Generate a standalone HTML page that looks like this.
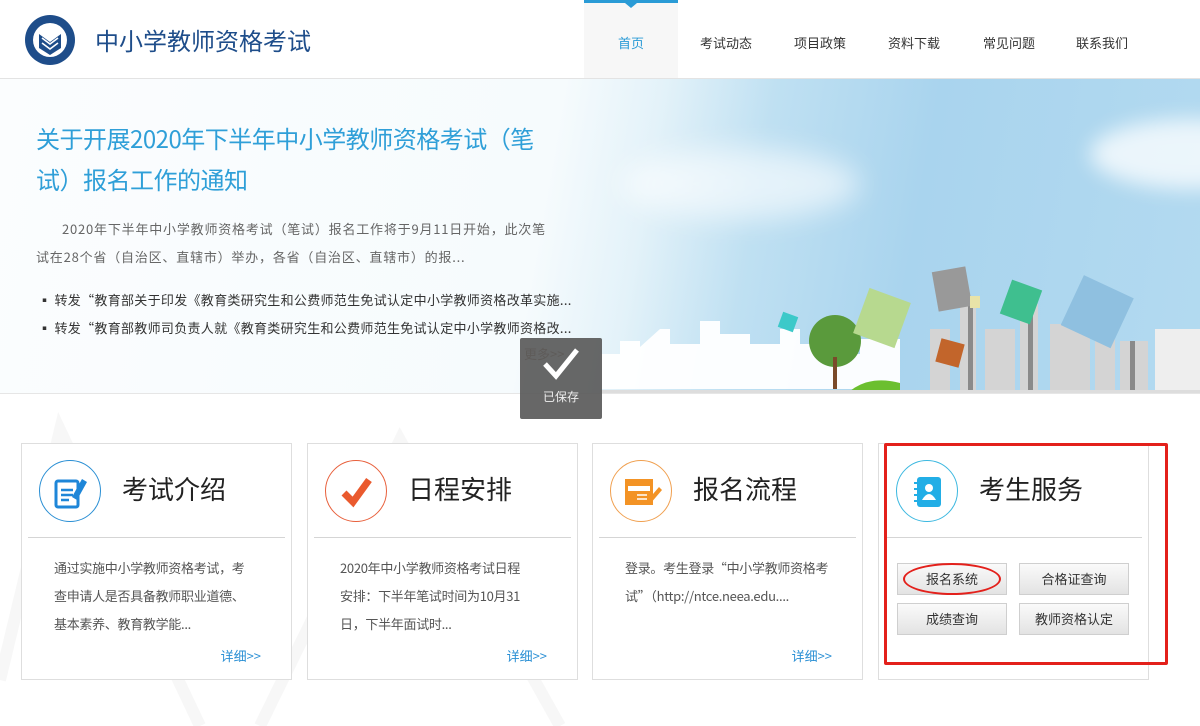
<!DOCTYPE html>
<html><head><meta charset="utf-8"><style>
*{margin:0;padding:0;box-sizing:border-box}
body{width:1200px;height:726px;overflow:hidden;background:#fff;font-family:"Noto Sans CJK SC","Liberation Sans",sans-serif;position:relative}
.a{position:absolute}
.nav{top:0;height:78px;line-height:86px;font-size:13px;color:#333;text-align:center}
.banner{top:79px;left:0;width:1200px;height:314px;background:linear-gradient(100deg,#fbfdfe 0%,#f6fbfd 45%,#e3f2f9 53%,#bfe0f2 62%,#a9d4ee 75%,#b3daf0 100%);overflow:hidden}
.card{top:443px;width:271px;height:237px;border:1px solid #dedede;background:#fff}
.circ{left:17px;top:16px;width:62px;height:62px;border-radius:50%;border:1px solid}
.ct{left:100px;top:26px;font-size:26px;color:#222}
.hr{left:6px;top:93px;width:257px;height:1px;background:#d5d5d5}
.txt{left:32px;top:110px;width:218px;font-size:13px;line-height:28px;color:#555;letter-spacing:-0.3px}
.more{right:30px;top:202px;font-size:13px;color:#2a8fd4}
.btn{width:110px;height:32px;border:1px solid #cfcfcf;background:linear-gradient(#fafafa,#e3e3e3);font-size:13px;color:#333;text-align:center;line-height:30px}
</style></head><body>
<svg class="a" style="left:24px;top:14px" width="52" height="52" viewBox="0 0 52 52"><circle cx="26" cy="26" r="25" fill="#1e4d8a"/><circle cx="26" cy="26" r="17" fill="#fff"/><path d="M15 20 L26 28 L37 20 L37 34 L26 41 L15 34Z" fill="#1e4d8a"/><path d="M18 24l8 6 8-6M18 29l8 6 8-6" stroke="#fff" stroke-width="1.6" fill="none"/></svg>
<div class="a" style="left:95px;top:23px;font-size:24px;line-height:34px;color:#1e4d8a">中小学教师资格考试</div>
<div class="a" style="left:584px;top:0;width:94px;height:78px;background:#f7f7f7"></div>
<div class="a" style="left:584px;top:0;width:94px;height:3px;background:#2a9bd6"></div>
<div class="a" style="left:625px;top:3px;width:0;height:0;border-left:6px solid transparent;border-right:6px solid transparent;border-top:5px solid #2a9bd6"></div>
<div class="a nav" style="left:584px;width:94px;color:#2a9bd6">首页</div>
<div class="a nav" style="left:680px;width:92px">考试动态</div>
<div class="a nav" style="left:774px;width:92px">项目政策</div>
<div class="a nav" style="left:868px;width:92px">资料下载</div>
<div class="a nav" style="left:963px;width:92px">常见问题</div>
<div class="a nav" style="left:1056px;width:92px">联系我们</div>
<div class="a" style="left:0;top:78px;width:1200px;height:1px;background:#e3e3e3"></div>
<div class="a banner">
<div class="a" style="left:620px;top:70px;width:240px;height:70px;border-radius:50%;background:rgba(255,255,255,.6);filter:blur(14px)"></div>
<div class="a" style="left:1090px;top:40px;width:200px;height:70px;border-radius:50%;background:rgba(255,255,255,.75);filter:blur(10px)"></div>
<svg class="a" style="left:600px;top:150px" width="600" height="164" viewBox="0 0 600 164">
<path d="M0 160 L0 125 L20 125 L20 112 L40 112 L40 118 L60 100 L70 100 L70 115 L100 115 L100 92 L120 92 L120 105 L150 105 L150 115 L180 115 L180 100 L200 100 L200 115 L230 115 L230 125 L260 125 L260 110 L300 110 L300 160Z" fill="#fff" opacity=".95"/>
<g fill="#d4d4d4"><rect x="330" y="100" width="20" height="64"/><rect x="360" y="70" width="16" height="94"/><rect x="385" y="100" width="30" height="64"/><rect x="420" y="75" width="18" height="89"/><rect x="450" y="95" width="40" height="69"/><rect x="495" y="105" width="20" height="59"/><rect x="520" y="112" width="28" height="52"/><rect x="555" y="100" width="45" height="64" fill="#eee"/></g>
<g fill="#8a8a8a"><rect x="368" y="70" width="5" height="94"/><rect x="428" y="75" width="5" height="89"/><rect x="530" y="112" width="5" height="52"/></g>
<circle cx="235" cy="112" r="26" fill="#5a9a3c"/><rect x="233" y="128" width="4" height="32" fill="#7a4a2a"/>
<path d="M250 162 q20-16 50-8 l0 8z" fill="#6bbf2f"/>
<rect x="180" y="85" width="16" height="16" fill="#3cc9c9" transform="rotate(20 188 93)"/>
<rect x="260" y="120" width="44" height="48" fill="#b7d98f" transform="translate(0 -55) rotate(20 282 144)"/>
<rect x="335" y="40" width="34" height="40" fill="#999" transform="rotate(-10 352 60)"/>
<rect x="338" y="112" width="24" height="24" fill="#c2652b" transform="rotate(15 350 124)"/>
<rect x="370" y="137" width="10" height="12" fill="#e8e3a8" transform="translate(0 -70)"/>
<rect x="405" y="135" width="32" height="36" fill="#3fbf8f" transform="translate(0 -80) rotate(20 421 153)"/>
<rect x="470" y="75" width="55" height="55" fill="#8fc0e0" transform="translate(0 -20) rotate(25 497 102)"/>
<rect x="0" y="161" width="600" height="3" fill="#ddd"/>
</svg>
<div class="a" style="left:36px;top:38px;width:520px;font-size:24px;line-height:41px;color:#2f9fd8;letter-spacing:-0.5px">关于开展2020年下半年中小学教师资格考试（笔试）报名工作的通知</div>
<div class="a" style="left:36px;top:136px;width:516px;font-size:13px;line-height:28px;color:#666;text-indent:26px;letter-spacing:0.8px">2020年下半年中小学教师资格考试（笔试）报名工作将于9月11日开始，此次笔试在28个省（自治区、直辖市）举办，各省（自治区、直辖市）的报...</div>
<div class="a" style="left:38px;top:207px;font-size:13px;line-height:28px;color:#333;white-space:nowrap;letter-spacing:0.3px">▪ 转发“教育部关于印发《教育类研究生和公费师范生免试认定中小学教师资格改革实施...<br>▪ 转发“教育部教师司负责人就《教育类研究生和公费师范生免试认定中小学教师资格改...</div>
<div class="a" style="left:524px;top:265px;font-size:13px;color:#8a6a4a">更多&gt;&gt;</div>
</div>
<div class="a" style="left:0;top:393px;width:1200px;height:1px;background:#e6e6e6"></div>
<svg class="a" style="left:0;top:400px" width="600" height="326"><path d="M0 280 L60 30 L200 326 M260 326 L400 40 L560 326" stroke="#f7f7f7" stroke-width="12" fill="none"/></svg>
<div class="a" style="left:520px;top:338px;width:82px;height:81px;background:rgba(90,90,90,.92);border-radius:2px"></div>
<svg class="a" style="left:541px;top:346px" width="40" height="36"><path d="M4 18 L15 30 L36 4" stroke="#fff" stroke-width="5" fill="none"/></svg>
<div class="a" style="left:520px;top:388px;width:82px;text-align:center;font-size:12px;color:#eee">已保存</div>
<div class="a card" style="left:21px">
<div class="a circ" style="border-color:#2a8fd4"></div>
<svg class="a" style="left:30px;top:29px" width="38" height="38"><rect x="4" y="8" width="22" height="26" rx="2" fill="#fff" stroke="#1e86d8" stroke-width="3"/><path d="M9 17h12M9 22h12M9 27h8" stroke="#1e86d8" stroke-width="2.5"/><path d="M20 24 L30 6 L35 9 L25 27Z" fill="#1e86d8"/></svg>
<div class="a ct">考试介绍</div><div class="a hr"></div>
<div class="a txt" style="width:200px">通过实施中小学教师资格考试，考查申请人是否具备教师职业道德、基本素养、教育教学能...</div>
<div class="a more">详细&gt;&gt;</div></div>
<div class="a card" style="left:307px">
<div class="a circ" style="border-color:#e8603c"></div>
<svg class="a" style="left:30px;top:29px" width="38" height="38"><path d="M6 20 L15 29 L31 7" stroke="#ea5a2e" stroke-width="7" fill="none"/></svg>
<div class="a ct">日程安排</div><div class="a hr"></div>
<div class="a txt" style="width:186px">2020年中小学教师资格考试日程安排：下半年笔试时间为10月31日，下半年面试时...</div>
<div class="a more">详细&gt;&gt;</div></div>
<div class="a card" style="left:592px">
<div class="a circ" style="border-color:#f0a050"></div>
<svg class="a" style="left:30px;top:29px" width="40" height="38"><rect x="2" y="6" width="28" height="26" fill="#f39325"/><rect x="5" y="13" width="22" height="5" fill="#fff"/><path d="M14 22h10M14 26h10" stroke="#fff" stroke-width="1.5"/><path d="M24 28 L36 14 L39 17 L27 31Z" fill="#f39325"/></svg>
<div class="a ct">报名流程</div><div class="a hr"></div>
<div class="a txt" style="width:210px">登录。考生登录“中小学教师资格考试”（http://ntce.neea.edu....</div>
<div class="a more">详细&gt;&gt;</div></div>
<div class="a card" style="left:878px">
<div class="a circ" style="border-color:#3cb8e0"></div>
<svg class="a" style="left:30px;top:29px" width="38" height="38"><rect x="8" y="4" width="24" height="30" rx="3" fill="#22aee6"/><circle cx="20" cy="15" r="4" fill="#fff"/><path d="M13 27 q7-12 14 0z" fill="#fff"/><path d="M5 10h6M5 16h6M5 22h6M5 28h6" stroke="#22aee6" stroke-width="2"/></svg>
<div class="a ct">考生服务</div><div class="a hr"></div>
<div class="a btn" style="left:18px;top:119px">报名系统</div>
<div class="a btn" style="left:140px;top:119px">合格证查询</div>
<div class="a btn" style="left:18px;top:159px">成绩查询</div>
<div class="a btn" style="left:140px;top:159px">教师资格认定</div>
</div>
<div class="a" style="left:884px;top:443px;width:284px;height:222px;border:3px solid #e3201b;border-radius:2px"></div>
<div class="a" style="left:903px;top:563px;width:98px;height:32px;border:2px solid #e3201b;border-radius:50%"></div>
</body></html>
